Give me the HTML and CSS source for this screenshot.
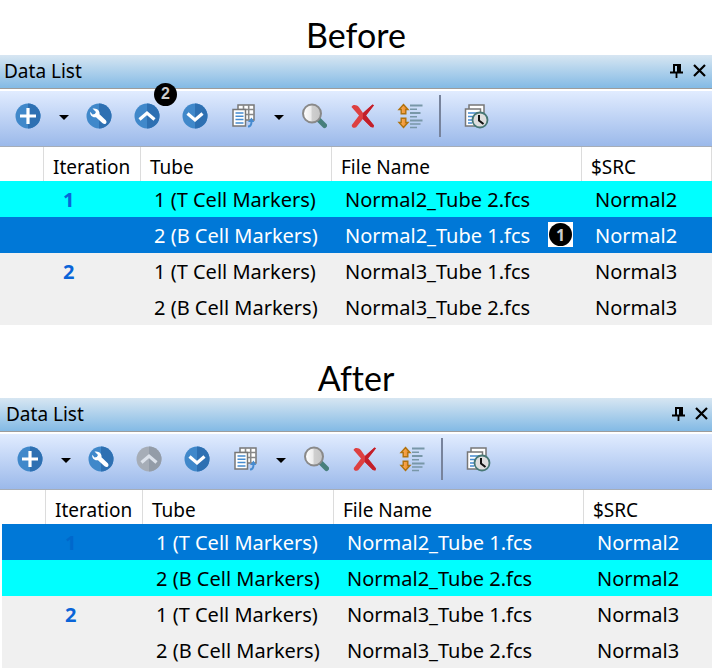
FILE: index.html
```html
<!DOCTYPE html>
<html lang="en">
<head>
<meta charset="utf-8">
<title>Data List</title>
<link rel="stylesheet" href="styles.css">
</head>
<body>
<svg class="defs" aria-hidden="true">
  <defs>
    <linearGradient id="lens" x1="0" x2="1"><stop offset="0" stop-color="#fff"/><stop offset=".45" stop-color="#ececec"/><stop offset=".5" stop-color="#cfcfcf"/><stop offset="1" stop-color="#c4c4c4"/></linearGradient>
    <linearGradient id="gold" x1="0" x2="1"><stop offset="0" stop-color="#ffb765"/><stop offset="1" stop-color="#e78420"/></linearGradient>
    <symbol id="disc" viewBox="0 0 26 26"><circle cx="13" cy="13" r="12.5" fill="#4088ca"/><path d="M13 .5a12.500 12.500 0 0 1 0 25z" fill="#2e70b2"/></symbol>
    <symbol id="plus" viewBox="0 0 26 26"><use href="#disc"/><path d="M13 5v16M5 13h16" stroke="#fff" stroke-width="3.200"/></symbol>
    <symbol id="wrench" viewBox="0 0 26 26"><use href="#disc"/><path d="M6.500 5.600L10 9l-1.200 2.100-2.300.5-2.300-2.800c-.4 3.400 2 6 5.800 5.400l6.600 6c2.700 2.200 5.200-.5 3.200-3l-6.300-5.900c.8-3.500-2.600-6.600-7-5.700z" fill="#fff"/></symbol>
    <symbol id="up" viewBox="0 0 26 26"><use href="#disc"/><path d="M5.500 16.500L13 10l7.500 6.500" fill="none" stroke="#fff" stroke-width="3.200"/></symbol>
    <symbol id="up-off" viewBox="0 0 26 26"><circle cx="13" cy="13" r="12.500" fill="#a6adb7"/><path d="M13 .5a12.500 12.500 0 0 1 0 25z" fill="#939ca8"/><path d="M5.500 16.500L13 10l7.500 6.500" fill="none" stroke="#dce2eb" stroke-width="3.200"/></symbol>
    <symbol id="down" viewBox="0 0 26 26"><use href="#disc"/><path d="M5.500 10.500L13 17l7.500-6.500" fill="none" stroke="#fff" stroke-width="3.200"/></symbol>
    <symbol id="grid" viewBox="0 0 26 26"><path d="M8 2h16v15H8z" fill="#fff" stroke="#777" stroke-width="1.500"/><path d="M8 6.500h16M8 11.500h16M13.500 2v15M18.700 2v15" stroke="#888" stroke-width="1.600"/><path d="M3 6.500h12.500V23H3z" fill="#fff" stroke="#777" stroke-width="1.500"/><path d="M5.500 10h8M5.500 13.300h8M5.500 16.600h8M5.500 19.900h8" stroke="#468bd0" stroke-width="1.500"/><path d="M18 23.500q3.500 0 3.500-5" fill="none" stroke="#468bd0" stroke-width="2"/><path d="M18 19l3.500-4.500 2.800 4.500z" fill="#468bd0"/></symbol>
    <symbol id="find" viewBox="0 0 26 26"><path d="M17 16l6.500 6.500" stroke="#477f7c" stroke-width="5" stroke-linecap="round"/><circle cx="11" cy="10.500" r="9" fill="url(#lens)" stroke="#898989" stroke-width="2"/></symbol>
    <symbol id="cross" viewBox="0 0 26 26"><path d="M2.500 4C3.500 1 8 1.500 10 4.200L14 10 23.500 1.500l1.500.8L17 12.500 25 22.500 24.300 24.500l-2.500-.4-8-8.200-6 7.500c-2 2.500-5.500 1.500-5-1.400L10 12.500z" fill="#dd4041"/><path d="M14 10l9.500-8.500 1.500.8L17 12.500l8 10-.7 2-2.500-.4-8-8.200z" fill="#c21f2a"/></symbol>
    <symbol id="sort" viewBox="0 0 26 26"><path d="M6.500 1.500l4.500 5H8.800v4.300H4.200V6.500H2zM6.500 24.500l4.500-5H8.800v-4.300H4.200v4.300H2z" fill="url(#gold)" stroke="#b0720e" stroke-width="1.400"/><path d="M13 2.500h12.500M13 10h10.500M13 17.500h12.500" stroke="#7897a8" stroke-width="2"/><path d="M13 6.200h7M13 13.800h7M13 21h10.500M13 24.500h7" stroke="#7897a8" stroke-width="1.600"/></symbol>
    <symbol id="history" viewBox="0 0 26 26"><path d="M6 2h15v15H6z" fill="#fff" stroke="#777" stroke-width="1.500"/><path d="M2.500 6h15v17h-15z" fill="#fff" stroke="#777" stroke-width="1.500"/><path d="M5 10h9M5 13.500h7M5 17h4M5 20h4" stroke="#468bd0" stroke-width="1.500"/><circle cx="17" cy="17" r="7.500" fill="#dedede" stroke="#477775" stroke-width="1.800"/><path d="M16 12v5.500l4.500 3.500" fill="none" stroke="#111" stroke-width="2"/></symbol>
    <symbol id="pin" viewBox="0 0 13 15"><path d="M3 1h8v9H3zM5 3v6h2V3z" fill="#000" fill-rule="evenodd"/><path d="M0 9.500h13M6.500 9v6" stroke="#000" stroke-width="1.800"/></symbol>
    <symbol id="close" viewBox="0 0 13 13"><path d="M1 1l11 11M12 1L1 12" stroke="#000" stroke-width="2.200"/></symbol>
  </defs>
</svg>
<main>
  <section class="example">
    <h2>Before</h2>
    <div class="panel">
      <header class="titlebar">
        <h3>Data List</h3>
        <button aria-label="Pin"><svg class="pin"><use href="#pin"/></svg></button>
        <button aria-label="Close"><svg class="close"><use href="#close"/></svg></button>
      </header>
      <div class="toolbar">
        <button class="tool" aria-label="Add"><svg><use href="#plus"/></svg></button>
        <button class="menu" aria-label="Add options"></button>
        <button class="tool" aria-label="Settings"><svg><use href="#wrench"/></svg></button>
        <button class="tool" aria-label="Move up"><svg><use href="#up"/></svg><span class="step step-tool">2</span></button>
        <button class="tool" aria-label="Move down"><svg><use href="#down"/></svg></button>
        <button class="tool" aria-label="Columns"><svg><use href="#grid"/></svg></button>
        <button class="menu" aria-label="Column options"></button>
        <button class="tool" aria-label="Find"><svg><use href="#find"/></svg></button>
        <button class="tool" aria-label="Remove"><svg><use href="#cross"/></svg></button>
        <button class="tool" aria-label="Sort"><svg><use href="#sort"/></svg></button>
        <span class="divider"></span>
        <button class="tool" aria-label="History"><svg><use href="#history"/></svg></button>
      </div>
      <table>
        <colgroup><col class="c-mark"><col class="c-iter"><col class="c-tube"><col class="c-file"><col></colgroup>
        <thead><tr><th></th><th>Iteration</th><th>Tube</th><th>File Name</th><th>$SRC</th></tr></thead>
        <tbody>
          <tr class="linked"><td></td><td class="iter">1</td><td>1 (T Cell Markers)</td><td>Normal2_Tube 2.fcs</td><td>Normal2</td></tr>
          <tr class="selected"><td></td><td class="iter"></td><td>2 (B Cell Markers)</td><td>Normal2_Tube 1.fcs<span class="step-box"><span class="step">1</span></span></td><td>Normal2</td></tr>
          <tr><td></td><td class="iter">2</td><td>1 (T Cell Markers)</td><td>Normal3_Tube 1.fcs</td><td>Normal3</td></tr>
          <tr><td></td><td class="iter"></td><td>2 (B Cell Markers)</td><td>Normal3_Tube 2.fcs</td><td>Normal3</td></tr>
        </tbody>
      </table>
    </div>
  </section>
  <section class="example">
    <h2>After</h2>
    <div class="panel inset">
      <header class="titlebar">
        <h3>Data List</h3>
        <button aria-label="Pin"><svg class="pin"><use href="#pin"/></svg></button>
        <button aria-label="Close"><svg class="close"><use href="#close"/></svg></button>
      </header>
      <div class="toolbar">
        <button class="tool" aria-label="Add"><svg><use href="#plus"/></svg></button>
        <button class="menu" aria-label="Add options"></button>
        <button class="tool" aria-label="Settings"><svg><use href="#wrench"/></svg></button>
        <button class="tool" aria-label="Move up" disabled><svg><use href="#up-off"/></svg></button>
        <button class="tool" aria-label="Move down"><svg><use href="#down"/></svg></button>
        <button class="tool" aria-label="Columns"><svg><use href="#grid"/></svg></button>
        <button class="menu" aria-label="Column options"></button>
        <button class="tool" aria-label="Find"><svg><use href="#find"/></svg></button>
        <button class="tool" aria-label="Remove"><svg><use href="#cross"/></svg></button>
        <button class="tool" aria-label="Sort"><svg><use href="#sort"/></svg></button>
        <span class="divider"></span>
        <button class="tool" aria-label="History"><svg><use href="#history"/></svg></button>
      </div>
      <table>
        <colgroup><col class="c-mark"><col class="c-iter"><col class="c-tube"><col class="c-file"><col></colgroup>
        <thead><tr><th></th><th>Iteration</th><th>Tube</th><th>File Name</th><th>$SRC</th></tr></thead>
        <tbody>
          <tr class="selected"><td></td><td class="iter">1</td><td>1 (T Cell Markers)</td><td>Normal2_Tube 1.fcs</td><td>Normal2</td></tr>
          <tr class="linked"><td></td><td class="iter"></td><td>2 (B Cell Markers)</td><td>Normal2_Tube 2.fcs</td><td>Normal2</td></tr>
          <tr><td></td><td class="iter">2</td><td>1 (T Cell Markers)</td><td>Normal3_Tube 1.fcs</td><td>Normal3</td></tr>
          <tr><td></td><td class="iter"></td><td>2 (B Cell Markers)</td><td>Normal3_Tube 2.fcs</td><td>Normal3</td></tr>
        </tbody>
      </table>
    </div>
  </section>
</main>
</body>
</html>
```
FILE: styles.css
```css
* { box-sizing: border-box; }

body {
  margin: 0;
  background: #fff;
  color: #000;
  font: 20px/24px "Noto Sans", "Open Sans", sans-serif;
}

.defs { position: absolute; width: 0; height: 0; }

main {
  display: flex;
  flex-direction: column;
  gap: 33px;
  padding-top: 15px;
}

h2 {
  margin: 0;
  font: 34px/40px Lato, sans-serif;
  font-variant-ligatures: none;
  text-align: center;
}

h3 { flex: 1; margin: 0; font-size: 19px; font-weight: 400; }

button {
  display: flex;
  align-items: center;
  justify-content: center;
  padding: 0;
  border: 0;
  background: none;
}

.panel { --inset: 0px; }
.inset { --inset: 2px; }

.titlebar {
  display: flex;
  align-items: center;
  gap: 10px;
  height: 34px;
  padding: 0 calc(6px - var(--inset)) 2px calc(4px + var(--inset));
  background: linear-gradient(#d7e6f2, #83bae5);
  border-bottom: 1px solid #9c9c9c;
}
.pin { width: 13px; height: 15px; }
.close { width: 13px; height: 13px; }

.toolbar {
  display: flex;
  align-items: center;
  height: 58px;
  padding: 0 0 6px calc(4px + var(--inset));
  background: linear-gradient(#e1ecff, #9bb9ea);
  border-top: 2px solid #fff;
  border-bottom: 1px solid #a6adb7;
}
.tool { position: relative; width: 48px; height: 48px; }
.tool svg { width: 26px; height: 26px; }
.menu { width: 23px; height: 48px; padding-top: 4px; }
.menu::before {
  content: "";
  border: 5px solid transparent;
  border-top-color: #000;
  border-bottom: 0;
}
.divider {
  width: 2px;
  height: 42px;
  margin: 0 11px 0 5px;
  background: #77839c;
}

.step {
  display: flex;
  align-items: center;
  justify-content: center;
  width: 23px;
  height: 23px;
  border-radius: 50%;
  background: #000;
  color: #ccc;
  font-size: 16px;
  font-weight: 700;
  line-height: 20px;
}
.step-tool { position: absolute; top: -9px; right: -6px; }
.step-box {
  position: absolute;
  top: 5px;
  right: 9px;
  padding: 1px;
  background: #fff;
}

table {
  width: calc(100% - var(--inset));
  margin-left: var(--inset);
  table-layout: fixed;
  border-collapse: separate;
  border-spacing: 0;
  text-align: left;
  white-space: nowrap;
}
.c-mark { width: 44px; }
.c-iter { width: 97px; }
.c-tube { width: 191px; }
.c-file { width: 250px; }

th {
  height: 34px;
  padding: 5px 0 0 9px;
  border-right: 1px solid #dcdcdc;
  background: #fff;
  font-size: 19px;
  font-weight: 400;
}
.inset th:last-child { border-right: 0; }

td {
  position: relative;
  height: 36px;
  padding: 2px 0 0 13px;
  background: #f0f0f0;
}
.iter {
  padding-left: 19px;
  color: #0a64d8;
  font-weight: 700;
}
.linked td { background: #0ff; }
.selected td { background: #0078d7; color: #fff; }
.selected td.iter { color: #0068cc; }
```
